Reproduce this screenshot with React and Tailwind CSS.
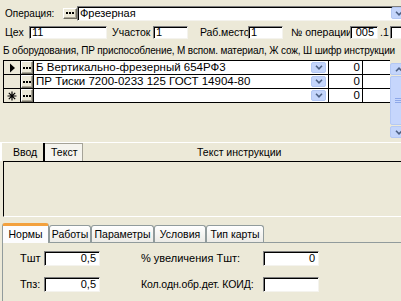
const sunken = "bg-white border border-t-[#7F7F7F] border-l-[#7F7F7F] border-r-[#F4F3EE] border-b-[#F4F3EE] shadow-[inset_1px_1px_0_#000]";
const raised = "bg-[#ECE9D8] border border-t-white border-l-white border-r-[#716F64] border-b-[#716F64] shadow-[inset_-1px_-1px_0_#ACA899]";

function Dots() {
  return (
    <div className="flex gap-[1px]">
      <span className="w-[2px] h-[2px] bg-black" />
      <span className="w-[2px] h-[2px] bg-black" />
      <span className="w-[2px] h-[2px] bg-black" />
    </div>
  );
}

function Chev({ up }) {
  return (
    <svg width="8" height="5" viewBox="0 0 8 5">
      <path d={up ? "M1 4.2 L4 1.2 L7 4.2" : "M1 0.8 L4 3.8 L7 0.8"} stroke="#4D6185" strokeWidth="1.6" fill="none" />
    </svg>
  );
}

function DropBtn({ cls }) {
  return (
    <div className={"flex items-center justify-center rounded-[2px] bg-[#C4D5FB] border border-[#B4C8F4] " + cls}>
      <Chev />
    </div>
  );
}

function Arrow() {
  return (
    <svg width="7" height="10" viewBox="0 0 7 10">
      <path d="M1 0.5 L6 5 L1 9.5 Z" fill="#000" />
    </svg>
  );
}

function Star() {
  return (
    <svg width="10" height="10" viewBox="0 0 10 10">
      <path d="M5 0.5 V9.5 M0.5 5 H9.5 M1.8 1.8 L8.2 8.2 M8.2 1.8 L1.8 8.2" stroke="#000" strokeWidth="1.2" />
    </svg>
  );
}

const rows = [
  { h: "arrow", text: "Б Вертикально-фрезерный 654РФ3" },
  { h: "", text: "ПР Тиски 7200-0233 125 ГОСТ 14904-80" },
  { h: "star", text: "" },
];

function Tab({ label, sel, w }) {
  if (sel) {
    return (
      <div className={"h-[20px] -mb-[1px] rounded-t-[3px] border border-[#919B9C] border-b-0 border-t-[3px] border-t-[#F3A13E] bg-[#FCFCFE] flex items-center justify-center pb-[1px] " + w}>
        {label}
      </div>
    );
  }
  return (
    <div className={"h-[17px] rounded-t-[3px] border border-[#919B9C] border-b-0 bg-linear-to-b from-white to-[#ECEBE6] flex items-center justify-center " + w}>
      {label}
    </div>
  );
}

export default function App() {
  return (
    <div className="w-[401px] h-[301px] overflow-hidden bg-[#ECE9D8] text-black text-[10.5px] leading-[13px] font-['Liberation_Sans',Arial,sans-serif] pt-[6px]">
      {/* Row 1 */}
      <div className="flex items-center h-[14px] whitespace-nowrap">
        <span className="w-[63px] shrink-0 pl-[5px] text-[10px]">Операция:</span>
        <div className={"w-[14px] h-[11px] shrink-0 flex items-center justify-center " + raised}>
          <Dots />
        </div>
        <div className={"w-[340px] h-[15px] shrink-0 flex items-center text-[11px] " + sunken}>
          <span className="pl-[2px] flex-1">Фрезерная</span>
          <DropBtn cls="w-[16px] h-[12px] mr-[9px]" />
        </div>
      </div>

      {/* Row 2 */}
      <div className="flex items-center h-[13px] mt-[6px] whitespace-nowrap">
        <span className="w-[29px] shrink-0 pl-[5px]">Цех</span>
        <div className={"w-[78px] h-[13px] shrink-0 pl-[2px] flex items-center text-[11px] " + sunken}>11</div>
        <span className="w-[41px] shrink-0 ml-[5px]">Участок</span>
        <div className={"w-[35px] h-[13px] shrink-0 pl-[2px] flex items-center text-[11px] " + sunken}>1</div>
        <span className="w-[48px] shrink-0 ml-[12px] tracking-[-0.1px]">Раб.место</span>
        <div className={"w-[35px] h-[13px] shrink-0 pl-[2px] flex items-center text-[11px] " + sunken}>1</div>
        <span className="w-[59px] shrink-0 ml-[8px]">№ операции</span>
        <div className={"w-[28px] h-[13px] shrink-0 pr-[3px] flex items-center justify-end text-[11px] " + sunken}>005</div>
        <span className="w-[10px] shrink-0 ml-[2px]">.1</span>
        <div className={"w-[30px] h-[13px] shrink-0 " + sunken}></div>
      </div>

      {/* Caption */}
      <div className="mt-[5px] pl-[3px] whitespace-nowrap text-[10px] tracking-[-0.15px]">
        Б оборудования, ПР приспособление, М вспом. материал, Ж сож, Ш шифр инструкции
      </div>

      {/* Grid */}
      <div className="mt-[3px] h-[82px] flex">
        <div className="ml-[3px] w-[387px] shrink-0 self-start border-t border-l border-black">
          {rows.map((r, i) => (
            <div key={i} className="flex h-[14px] border-b border-black">
              <div className="w-[17px] shrink-0 border-r border-black flex items-center justify-center">
                {r.h === "arrow" && <Arrow />}
                {r.h === "star" && <Star />}
              </div>
              <div className="w-[13px] shrink-0 border-r border-black">
                <div className={"w-full h-full flex items-center justify-center " + raised}>
                  <Dots />
                </div>
              </div>
              <div className="w-[295px] shrink-0 border-r border-black bg-white flex items-center whitespace-nowrap">
                <span className="pl-[2px] flex-1 text-[11.5px]">{r.text}</span>
                <DropBtn cls="w-[15px] h-[11px] mr-[2px]" />
              </div>
              <div className="w-[34px] shrink-0 border-r border-black bg-white flex items-center justify-end pr-[2px] text-[11.5px]">0</div>
              <div className="w-[27px] shrink-0 bg-white"></div>
            </div>
          ))}
        </div>
        <div className="w-[17px] shrink-0 mt-[3px] h-[75px] flex flex-col gap-[1px]">
          <div className="h-[12px] rounded-[2px] bg-[#C4D5FB] border border-[#B4C8F4] flex items-center justify-center">
            <Chev up />
          </div>
          <div className="flex-1 rounded-[2px] bg-[#C6D6FC] border border-[#B4C8F4] flex flex-col items-center justify-center gap-[1px]">
            <span className="w-[7px] h-[1px] bg-[#8EA8E8]" />
            <span className="w-[7px] h-[1px] bg-[#8EA8E8]" />
            <span className="w-[7px] h-[1px] bg-[#8EA8E8]" />
          </div>
          <div className="h-[12px] rounded-[2px] bg-[#C4D5FB] border border-[#B4C8F4] flex items-center justify-center">
            <Chev />
          </div>
        </div>
      </div>

      {/* Input/Text strip */}
      <div className="border-t border-white h-[19px] flex whitespace-nowrap">
        <div className="w-[43px] shrink-0 flex items-center pl-[11px] border-l-[2px] border-white">Ввод</div>
        <div className="w-[2px] shrink-0 bg-black" />
        <div className="w-[38px] shrink-0 bg-[#F5F4EE] border-t border-r border-[#A5A398] flex items-center pl-[6px]">Текст</div>
        <div className="ml-[114px] flex items-center">Текст инструкции</div>
      </div>

      {/* Memo */}
      <div className="ml-[3px] h-[56px] border-t border-l border-black border-b border-b-white"></div>

      {/* Tabs */}
      <div className="mt-[5px] pl-[2px] flex items-end h-[20px] whitespace-nowrap relative z-10 text-[10.5px]">
        <Tab label="Нормы" sel w="w-[47px]" />
        <Tab label="Работы" w="w-[42px]" />
        <Tab label="Параметры" w="w-[63px]" />
        <Tab label="Условия" w="w-[52px]" />
        <Tab label="Тип карты" w="w-[58px]" />
      </div>
      <div className="ml-[2px] h-[60px] border-t border-l border-[#919B9C] whitespace-nowrap text-[11px]">
        <div className="flex items-center mt-[8px] h-[15px]">
          <span className="w-[41px] shrink-0 pl-[17px]">Тшт</span>
          <div className={"w-[56px] h-[15px] shrink-0 flex items-center justify-end pr-[3px] " + sunken}>0,5</div>
          <span className="w-[122px] shrink-0 ml-[41px]">% увеличения Тшт:</span>
          <div className={"w-[56px] h-[15px] shrink-0 flex items-center justify-end pr-[3px] " + sunken}>0</div>
        </div>
        <div className="flex items-center mt-[11px] h-[15px]">
          <span className="w-[41px] shrink-0 pl-[17px]">Тпз:</span>
          <div className={"w-[56px] h-[15px] shrink-0 flex items-center justify-end pr-[3px] " + sunken}>0,5</div>
          <span className="w-[122px] shrink-0 ml-[41px] text-[10.5px] tracking-[-0.1px]">Кол.одн.обр.дет. КОИД:</span>
          <div className={"w-[56px] h-[15px] shrink-0 " + sunken}></div>
        </div>
      </div>
    </div>
  );
}
